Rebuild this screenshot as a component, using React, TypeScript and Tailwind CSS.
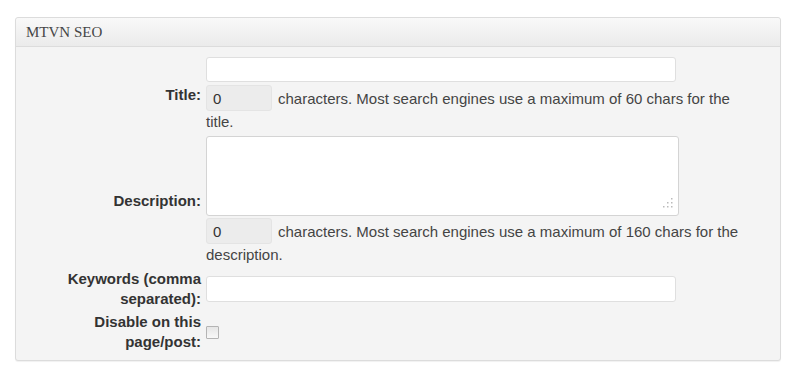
import React from "react";

export default function App() {
  const sans = { fontFamily: '"Liberation Sans", Arial, sans-serif' };
  return (
    <div className="w-[800px] h-[376px] bg-white pt-[17px] pl-[15px]" style={sans}>
      <div className="w-[766px] rounded-[3px] border border-[#dcdcdc] bg-[#f4f4f4] shadow-[0_1px_1px_rgba(0,0,0,0.06)]">
        <div
          className="h-[29px] flex items-center pl-[10px] border-b border-[#dcdcdc] rounded-t-[3px] bg-gradient-to-b from-[#f9f9f9] to-[#ebebeb] text-[15px] text-[#464646]"
          style={{ fontFamily: '"Liberation Serif", "Times New Roman", serif' }}
        >
          MTVN SEO
        </div>
        <div className="grid grid-cols-[150px_1fr] gap-x-[5px] gap-y-[3px] items-center pt-[10px] pb-[8px] pl-[35px] pr-[24px] text-[15px] leading-[20px] text-[#444]">
          {/* Title */}
          <div className="text-right font-bold text-[#333]">Title:</div>
          <div>
            <input
              type="text"
              className="block w-[470px] h-[25px] bg-white border border-[#dfdfdf] rounded-[3px] outline-none"
            />
            <div className="mt-[3px] leading-[22px]">
              <span className="inline-block align-baseline w-[66px] h-[26px] pt-[3px] pl-[6px] leading-[20px] bg-[#ececec] border border-[#e4e4e4] rounded-[3px] text-[#333] mr-[6px]">
                0
              </span>
              characters. Most search engines use a maximum of 60 chars for the title.
            </div>
          </div>

          {/* Description */}
          <div className="text-right font-bold text-[#333]">Description:</div>
          <div>
            <div className="relative w-[473px] h-[80px]">
              <textarea className="block w-full h-full resize-none bg-white border border-[#d4d4d4] rounded-[3px] outline-none" />
              <svg className="absolute right-[6px] bottom-[8px]" width="10" height="11" viewBox="0 0 10 11">
                <rect x="8" y="1" width="1.5" height="1.5" fill="#bbb" />
                <rect x="8" y="5" width="1.5" height="1.5" fill="#bbb" />
                <rect x="8" y="9" width="1.5" height="1.5" fill="#bbb" />
                <rect x="4" y="5" width="1.5" height="1.5" fill="#bbb" />
                <rect x="4" y="9" width="1.5" height="1.5" fill="#bbb" />
                <rect x="0" y="9" width="1.5" height="1.5" fill="#bbb" />
              </svg>
            </div>
            <div className="mt-[2px] leading-[22px]">
              <span className="inline-block align-baseline w-[66px] h-[26px] pt-[3px] pl-[6px] leading-[20px] bg-[#ececec] border border-[#e4e4e4] rounded-[3px] text-[#333] mr-[6px]">
                0
              </span>
              characters. Most search engines use a maximum of 160 chars for the description.
            </div>
          </div>

          {/* Keywords */}
          <div className="text-right font-bold text-[#333]">Keywords (comma separated):</div>
          <div>
            <input
              type="text"
              className="block w-[470px] h-[26px] bg-white border border-[#dfdfdf] rounded-[3px] outline-none"
            />
          </div>

          {/* Disable */}
          <div className="text-right font-bold text-[#333]">Disable on this page/post:</div>
          <div className="flex items-center">
            <span className="block w-[13px] h-[13px] border border-[#b4b4b4] rounded-[1px] bg-gradient-to-b from-[#e6e6e6] to-[#f8f8f8]" />
          </div>
        </div>
      </div>
    </div>
  );
}
